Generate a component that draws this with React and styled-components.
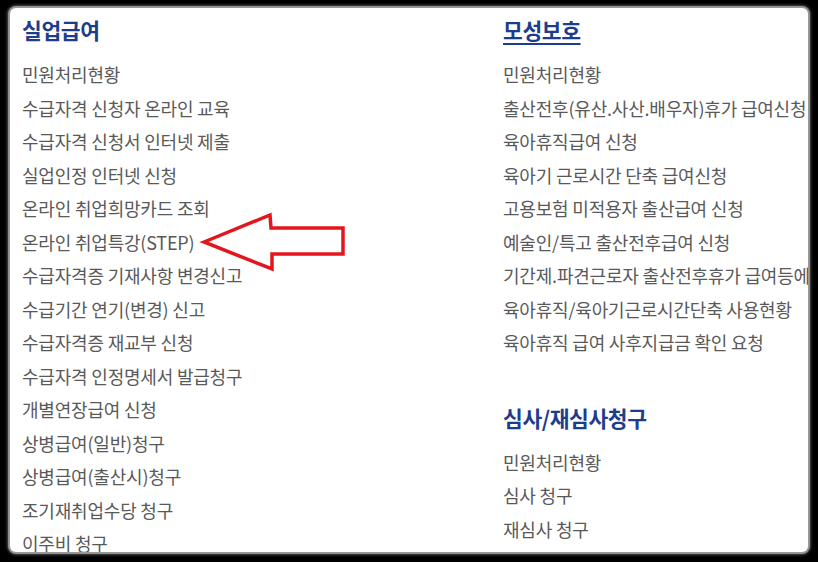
import React from "react";
import styled, { createGlobalStyle } from "styled-components";

const GlobalStyle = createGlobalStyle`
  html, body {
    margin: 0;
    padding: 0;
    background: #000;
  }
  body {
    font-family: "Noto Sans CJK KR", "Noto Sans", sans-serif;
  }
`;

const Stage = styled.div`
  position: relative;
  width: 818px;
  height: 562px;
  padding: 8px 10px 10px 10px;
  box-sizing: border-box;
`;

const Panel = styled.div`
  width: 798px;
  height: 544px;
  background: #fff;
  border-radius: 6px;
  overflow: hidden;
  box-shadow: 0 0 1px 2px #9a9a9a, 0 0 3px 3px #444;
  display: grid;
  grid-template-columns: 481px 1fr;
  padding: 7px 0 0 12px;
  box-sizing: border-box;
`;

const Column = styled.div`
  display: flex;
  flex-direction: column;
  white-space: nowrap;
  min-width: 0;
`;

const Heading = styled.h2`
  margin: ${(p) => (p.$gap ? "43px" : "0")} 0 13px 0;
  height: 30px;
  line-height: 30px;
  font-size: 21.5px;
  font-weight: 700;
  letter-spacing: -0.4px;
  color: #1d3d8c;
  text-decoration: ${(p) => (p.$underline ? "underline" : "none")};
  text-underline-offset: 4px;
  text-decoration-thickness: 1.5px;
`;

const Item = styled.div`
  height: 33.5px;
  line-height: 33.5px;
  font-size: 18px;
  font-weight: 400;
  letter-spacing: -0.2px;
  color: #595959;
`;

const Arrow = styled.svg`
  position: absolute;
  left: 196px;
  top: 208px;
  width: 154px;
  height: 68px;
  pointer-events: none;
`;

const unemployment = [
  "민원처리현황",
  "수급자격 신청자 온라인 교육",
  "수급자격 신청서 인터넷 제출",
  "실업인정 인터넷 신청",
  "온라인 취업희망카드 조회",
  "온라인 취업특강(STEP)",
  "수급자격증 기재사항 변경신고",
  "수급기간 연기(변경) 신고",
  "수급자격증 재교부 신청",
  "수급자격 인정명세서 발급청구",
  "개별연장급여 신청",
  "상병급여(일반)청구",
  "상병급여(출산시)청구",
  "조기재취업수당 청구",
  "이주비 청구",
];

const maternity = [
  "민원처리현황",
  "출산전후(유산.사산.배우자)휴가 급여신청",
  "육아휴직급여 신청",
  "육아기 근로시간 단축 급여신청",
  "고용보험 미적용자 출산급여 신청",
  "예술인/특고 출산전후급여 신청",
  "기간제.파견근로자 출산전후휴가 급여등에 관한 특례",
  "육아휴직/육아기근로시간단축 사용현황",
  "육아휴직 급여 사후지급금 확인 요청",
];

const appeal = ["민원처리현황", "심사 청구", "재심사 청구"];

export default function App() {
  return (
    <>
      <GlobalStyle />
      <Stage>
        <Panel>
          <Column>
            <Heading>실업급여</Heading>
            {unemployment.map((t) => (
              <Item key={t}>{t}</Item>
            ))}
          </Column>
          <Column>
            <Heading $underline>모성보호</Heading>
            {maternity.map((t) => (
              <Item key={t}>{t}</Item>
            ))}
            <Heading $gap>심사/재심사청구</Heading>
            {appeal.map((t) => (
              <Item key={t}>{t}</Item>
            ))}
          </Column>
        </Panel>
        <Arrow viewBox="196 208 154 68">
          <polygon
            points="204,242 270,215 271,228 343,228 343,254 272,254 272,269"
            fill="none"
            stroke="#e3161d"
            strokeWidth="3.5"
            strokeLinejoin="miter"
          />
        </Arrow>
      </Stage>
    </>
  );
}
